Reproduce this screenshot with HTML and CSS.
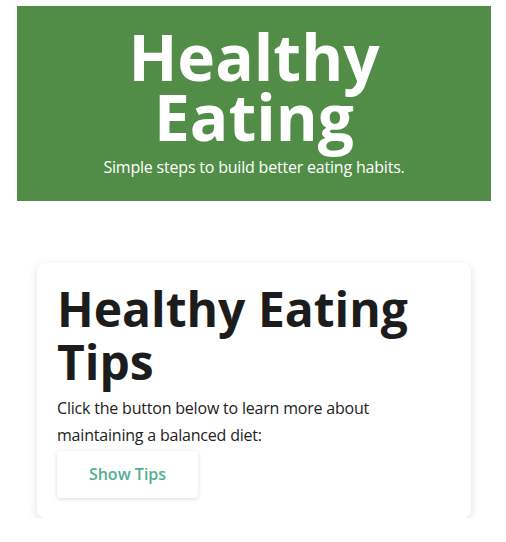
FILE: index.html
```html
<!DOCTYPE html>
<html lang="en">
<head>
<meta charset="utf-8">
<title>Healthy Eating</title>
<link rel="stylesheet" href="styles.css">
</head>
<body>
<div class="page">
  <p class="top-note">Your guide to everyday nutrition</p>
  <header class="hero">
    <h1 class="hero-title">Healthy Eating</h1>
    <p class="hero-sub">Simple steps to build better eating habits.</p>
  </header>
  <section class="card">
    <h2 class="card-title">Healthy Eating Tips</h2>
    <p class="card-text">Click the button below to learn more about maintaining a balanced diet:</p>
    <button class="btn">Show Tips</button>
  </section>
</div>
</body>
</html>
```
FILE: styles.css
```css
* { box-sizing: border-box; }
html, body { margin: 0; padding: 0; background: #fff; }
body {
  font-family: "Open Sans", "Liberation Sans", sans-serif;
  color: #1c1c1c;
}
.page {
  width: 474px;
  margin-left: 17px;
}
.top-note {
  margin: -20px 0 8px;
  height: 18px;
  font-size: 14px;
  line-height: 18px;
  color: #555;
  text-align: center;
}
.hero {
  background: #518d47;
  color: #fff;
  text-align: center;
  height: 195px;
  padding: 21px 20px 0;
}
.hero-title {
  margin: 0;
  font-size: 64px;
  line-height: 60px;
  font-weight: 700;
}
.hero-sub {
  margin: 9px 0 0;
  font-size: 16px;
  line-height: 22px;
  letter-spacing: -0.2px;
}
.card {
  margin: 62px 20px 0;
  background: #fff;
  border-radius: 8px;
  box-shadow: 0 3px 10px rgba(0,0,0,0.13);
  padding: 20px 20px 20px;
}
.card-title {
  margin: 0 0 6px;
  font-size: 48px;
  line-height: 1.1;
  font-weight: 700;
  color: #1c1c1c;
}
.card-text {
  margin: 0;
  font-size: 16px;
  line-height: 27px;
  letter-spacing: -0.2px;
  color: #222;
}
.btn {
  display: block;
  margin-top: 2px;
  width: 141px;
  height: 47px;
  border: none;
  border-radius: 4px;
  background: #fff;
  box-shadow: 0 1px 4px rgba(0,0,0,0.15);
  font-family: inherit;
  font-size: 16px;
  font-weight: 600;
  color: #52b08f;
}
```
